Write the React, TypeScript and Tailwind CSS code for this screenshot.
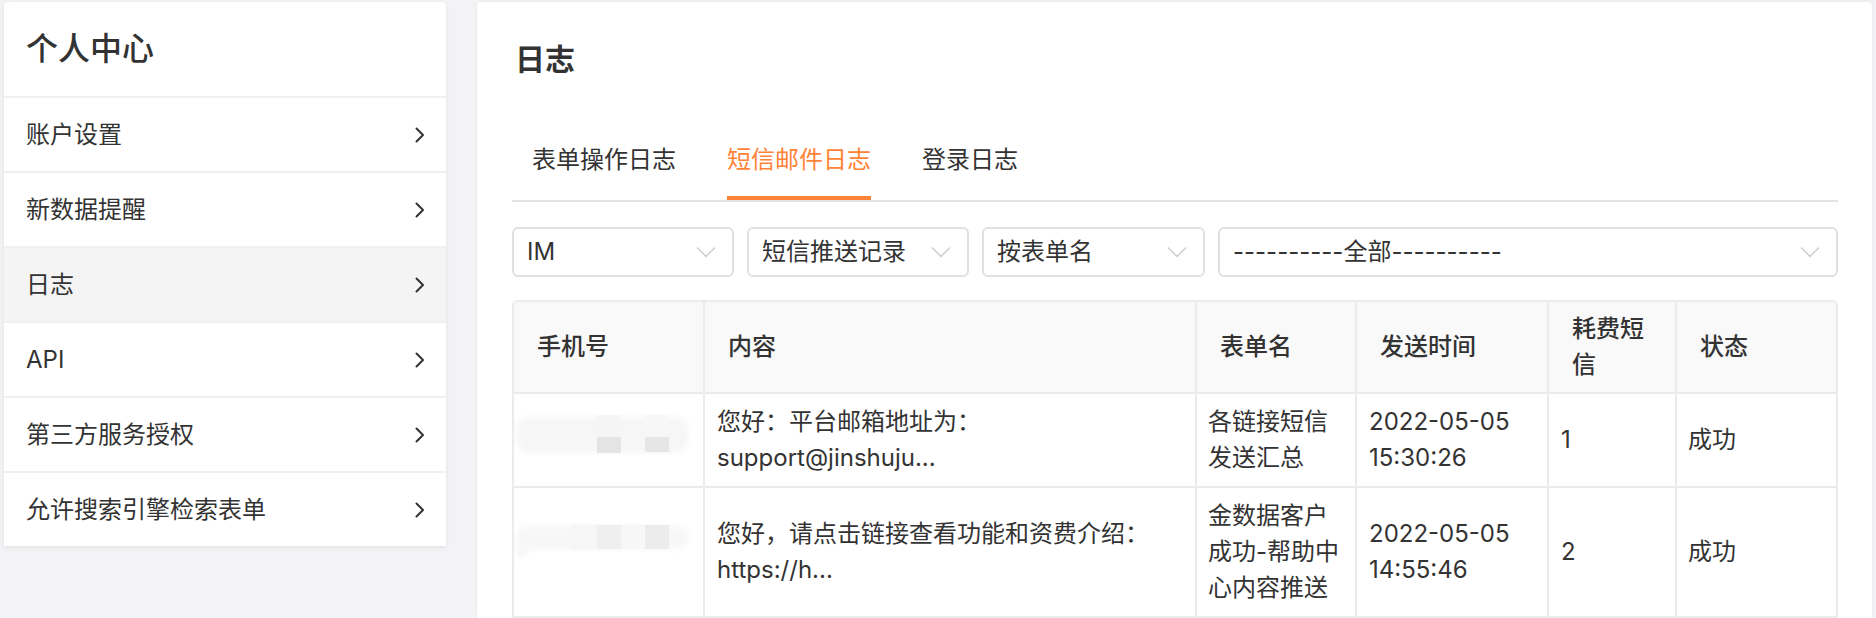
import { ReactNode } from "react";

const menu = ["账户设置", "新数据提醒", "日志", "API", "第三方服务授权", "允许搜索引擎检索表单"];
const tabs = ["表单操作日志", "短信邮件日志", "登录日志"];
const heads = ["手机号", "内容", "表单名", "发送时间", "耗费短信", "状态"];

const Chevron = () => (
  <svg width="10" height="16" viewBox="0 0 10 16" fill="none">
    <path d="M1.5 1.5 L8 8 L1.5 14.5" stroke="#333" strokeWidth="2" strokeLinecap="round" strokeLinejoin="round" />
  </svg>
);

const Caret = () => (
  <svg width="20" height="12" viewBox="0 0 20 12" fill="none">
    <path d="M1 1.5 L10 10.5 L19 1.5" stroke="#cfcfcf" strokeWidth="1.5" />
  </svg>
);

const Select = ({ className, children }: { className: string; children: ReactNode }) => (
  <div className={`h-[50px] border-2 border-[#e0e0e0] rounded-[6px] flex items-center justify-between pl-[13px] pr-[16px] text-[24px] ${className}`}>
    <span>{children}</span>
    <Caret />
  </div>
);

// blurred phone numbers
const MosaicA = () => (
  <svg width="178" height="42" viewBox="0 0 178 42">
    <defs>
      <filter id="b1" x="-10%" y="-30%" width="120%" height="160%">
        <feGaussianBlur stdDeviation="3" />
      </filter>
    </defs>
    <rect x="2" y="4" width="172" height="36" rx="14" fill="#f6f6f6" filter="url(#b1)" />
    <rect x="83" y="2" width="24" height="22" fill="#f5f5f5" />
    <rect x="131" y="2" width="24" height="22" fill="#f7f7f7" />
    <rect x="83" y="24" width="24" height="16" fill="#e4e4e4" />
    <rect x="131" y="24" width="24" height="15" fill="#e6e6e6" />
  </svg>
);

const MosaicB = () => (
  <svg width="178" height="38" viewBox="0 0 178 38">
    <defs>
      <filter id="b2" x="-10%" y="-40%" width="120%" height="180%">
        <feGaussianBlur stdDeviation="3" />
      </filter>
    </defs>
    <rect x="2" y="3" width="172" height="23" rx="10" fill="#f7f7f7" filter="url(#b2)" />
    <rect x="2" y="22" width="12" height="12" rx="4" fill="#f7f7f7" filter="url(#b2)" />
    <rect x="56" y="2" width="27" height="24" fill="#f6f6f6" />
    <rect x="83" y="2" width="24" height="24" fill="#efefef" />
    <rect x="107" y="2" width="24" height="24" fill="#f7f7f7" />
    <rect x="131" y="2" width="24" height="24" fill="#ececec" />
  </svg>
);

const rows: { phone: ReactNode; content: string[]; form: string[]; time: string[]; cost: string; status: string }[] = [
  {
    phone: <MosaicA />,
    content: ["您好：平台邮箱地址为：", "support@jinshuju..."],
    form: ["各链接短信", "发送汇总"],
    time: ["2022-05-05", "15:30:26"],
    cost: "1",
    status: "成功",
  },
  {
    phone: <MosaicB />,
    content: ["您好，请点击链接查看功能和资费介绍：", "https://h..."],
    form: ["金数据客户", "成功-帮助中", "心内容推送"],
    time: ["2022-05-05", "14:55:46"],
    cost: "2",
    status: "成功",
  },
];

const Lines = ({ lines }: { lines: string[] }) => (
  <div>
    {lines.map((l) => (
      <div key={l}>{l}</div>
    ))}
  </div>
);

export default function App() {
  const cell = "border-[#ebebeb] flex items-center";
  return (
    <div className="h-[618px] overflow-hidden bg-[#f3f3f6] flex gap-[31px] px-[4px] pt-[2px] font-['Inter','Noto_Sans_CJK_SC',sans-serif] text-[#333]">
      <aside className="w-[442px] shrink-0 self-start bg-white rounded-t-[4px] shadow-[0_1px_4px_rgba(0,0,0,0.08)]">
        <div className="h-[94px] flex items-center pl-[22px] text-[32px] font-medium">个人中心</div>
        {menu.map((m) => (
          <div
            key={m}
            className={`h-[75px] border-t-2 border-[#f0f0f0] flex items-center justify-between pl-[22px] pr-[21px] text-[24px] ${
              m === "日志" ? "bg-[#f4f4f4]" : ""
            }`}
          >
            <span>{m}</span>
            <Chevron />
          </div>
        ))}
      </aside>

      <main className="flex-1 bg-white rounded-t-[4px] shadow-[0_0_4px_rgba(0,0,0,0.06)] pl-[35px] pr-[34px] pt-[35px]">
        <h1 className="text-[30px] leading-[45px] font-semibold pl-[3px]">日志</h1>

        <div className="mt-[60px] flex gap-[51px] pl-[20px] border-b-2 border-[#e4e4e4]">
          {tabs.map((t) => (
            <div
              key={t}
              className={`text-[24px] leading-9 pb-[18px] border-b-4 ${
                t === "短信邮件日志" ? "border-[#ff8336] text-[#ff8336]" : "border-transparent"
              }`}
            >
              {t}
            </div>
          ))}
        </div>

        <div className="mt-[25px] flex gap-[13px]">
          <Select className="w-[222px]">IM</Select>
          <Select className="w-[222px]">短信推送记录</Select>
          <Select className="w-[223px]">按表单名</Select>
          <Select className="flex-1">----------全部----------</Select>
        </div>

        <div className="mt-[23px] grid grid-cols-[191px_492px_160px_192px_128px_1fr] border-2 border-[#ebebeb] rounded-t-[6px] overflow-hidden text-[24px] leading-9">
          {heads.map((h, i) => (
            <div
              key={h}
              className={`${cell} bg-[#f9f9f9] font-medium px-[23px] py-[9px] border-b-2 ${i < 5 ? "border-r-2" : ""}`}
            >
              {h}
            </div>
          ))}
          {rows.map((r, ri) => (
            <div key={ri} className="contents">
              <div className={`${cell} border-r-2 border-b-2 ${ri === 1 ? "pb-[20px]" : "pb-[12px]"}`}>{r.phone}</div>
              <div className={`${cell} border-r-2 border-b-2 pl-[12px] py-[10px]`}>
                <Lines lines={r.content} />
              </div>
              <div className={`${cell} border-r-2 border-b-2 pl-[11px] pr-[8px] py-[10px]`}>
                <Lines lines={r.form} />
              </div>
              <div className={`${cell} border-r-2 border-b-2 pl-[12px] py-[10px]`}>
                <Lines lines={r.time} />
              </div>
              <div className={`${cell} border-r-2 border-b-2 pl-[12px] py-[10px]`}>{r.cost}</div>
              <div className={`${cell} border-b-2 pl-[11px] py-[10px]`}>{r.status}</div>
            </div>
          ))}
        </div>
      </main>
    </div>
  );
}
